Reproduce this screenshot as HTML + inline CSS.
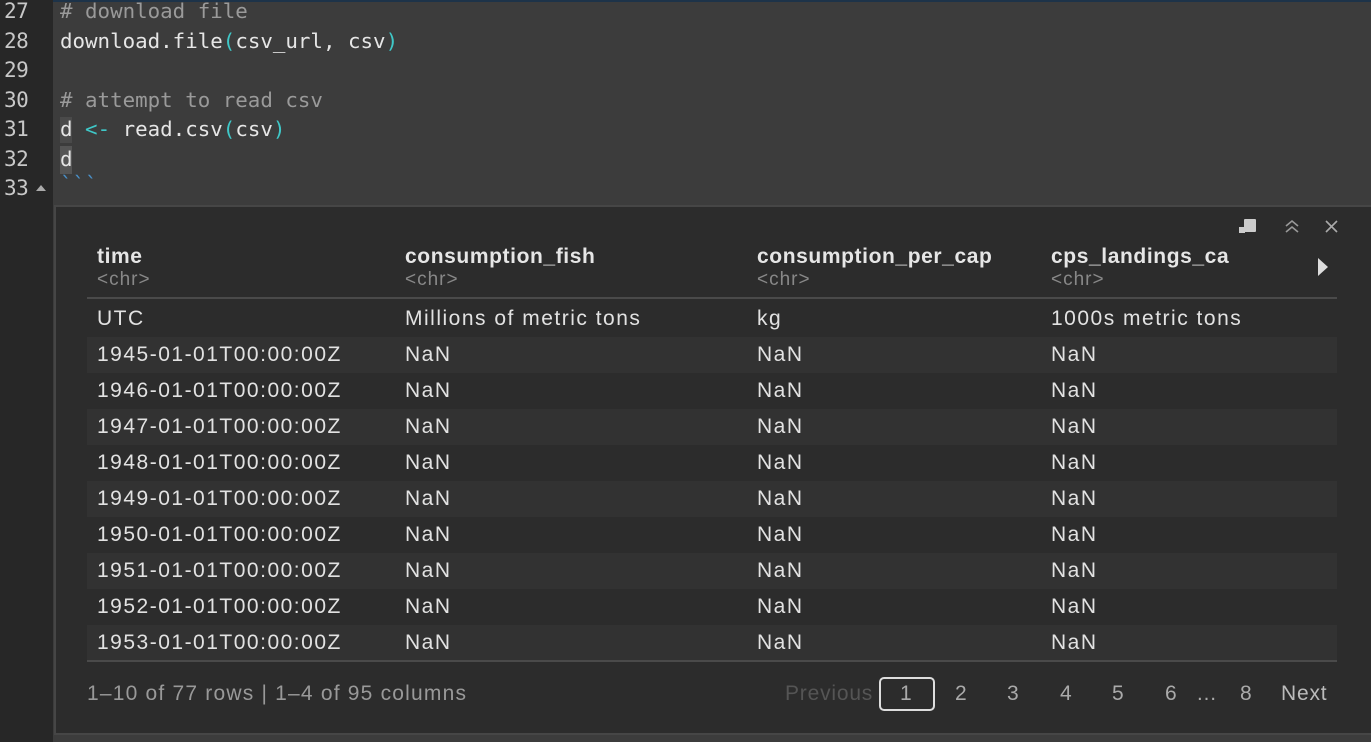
<!DOCTYPE html>
<html><head><style>
*{margin:0;padding:0;box-sizing:border-box}
body{width:1371px;height:742px;overflow:hidden;background:#3c3c3c;position:relative;font-family:"Liberation Sans",sans-serif}
.gutter{position:absolute;left:0;top:0;width:53px;height:742px;background:#272727}
.topline{position:absolute;left:0;top:0;width:1371px;height:2px;background:#1d3349}
.ln{position:absolute;left:4px;font:21px "DejaVu Sans Mono",monospace;color:#c8c8c8;letter-spacing:-0.5px}
.code{position:absolute;left:60px;font:20.8px "DejaVu Sans Mono",monospace;color:#e6e6e6;white-space:pre}
.cm{color:#9a9a9a}.p{color:#3fc8c8}
.panel{position:absolute;left:54px;top:205px;width:1317px;height:530px;background:#2c2c2c;border:2px solid #464646;border-right:none}
.t{position:absolute;font-size:21px;color:#e2e2e2;white-space:nowrap;letter-spacing:1.5px}
.h{font-weight:bold;color:#e6e6e6;letter-spacing:0.6px}
.ty{color:#888;font-size:19px;letter-spacing:1px}
.stripe{position:absolute;left:87px;width:1250px;height:36px;background:#323232}
.pg{position:absolute;top:682px;font-size:21px;color:#aaa;letter-spacing:0.8px}
</style></head><body>
<div class="topline"></div>
<div class="gutter"></div>
<div class="ln" style="top:-1px">27</div>
<div class="ln" style="top:29px">28</div>
<div class="ln" style="top:58px">29</div>
<div class="ln" style="top:88px">30</div>
<div class="ln" style="top:117px">31</div>
<div class="ln" style="top:147px">32</div>
<div class="ln" style="top:176px">33</div>
<div style="position:absolute;left:36px;top:185px;width:0;height:0;border-left:5px solid transparent;border-right:5px solid transparent;border-bottom:6px solid #aaa"></div>
<div class="code cm" style="top:-1px"># download file</div>
<div class="code" style="top:29px">download.file<span class="p">(</span>csv_url, csv<span class="p">)</span></div>
<div class="code cm" style="top:88px"># attempt to read csv</div>
<div style="position:absolute;left:60px;top:117px;width:12px;height:26px;background:#4a4a4a"></div>
<div style="position:absolute;left:60px;top:146px;width:12px;height:28px;background:#555"></div>
<div class="code" style="top:117px">d <span class="p">&lt;-</span> read.csv<span class="p">(</span>csv<span class="p">)</span></div>
<div class="code" style="top:147px">d</div>
<div class="code" style="top:172px;color:#4a90c8">&#96;&#96;&#96;</div>
<div class="panel"></div>
<div style="position:absolute;left:1244px;top:219px;width:12px;height:13px;background:#ccc;border-radius:1px"></div>
<div style="position:absolute;left:1239px;top:227px;width:6px;height:6px;background:#ccc"></div>
<svg style="position:absolute;left:1284px;top:218px" width="16" height="16"><path d="M2 8l6-5 6 5M2 14l6-5 6 5" stroke="#999" stroke-width="1.6" fill="none"/></svg>
<svg style="position:absolute;left:1325px;top:220px" width="13" height="13"><path d="M1 1l11 11M12 1L1 12" stroke="#aaa" stroke-width="1.6"/></svg>
<svg style="position:absolute;left:1317px;top:258px" width="12" height="18"><path d="M1 0l10 9-10 9z" fill="#ddd"/></svg>
<div class="t h" style="left:97px;top:245px">time</div>
<div class="t h" style="left:405px;top:245px">consumption_fish</div>
<div class="t h" style="left:757px;top:245px">consumption_per_cap</div>
<div class="t h" style="left:1051px;top:245px">cps_landings_ca</div>
<div class="t ty" style="left:97px;top:269px">&lt;chr&gt;</div>
<div class="t ty" style="left:405px;top:269px">&lt;chr&gt;</div>
<div class="t ty" style="left:757px;top:269px">&lt;chr&gt;</div>
<div class="t ty" style="left:1051px;top:269px">&lt;chr&gt;</div>
<div style="position:absolute;left:87px;top:297px;width:1250px;height:2px;background:#4a4a4a"></div>
<div class="stripe" style="top:337px"></div>
<div class="stripe" style="top:409px"></div>
<div class="stripe" style="top:481px"></div>
<div class="stripe" style="top:553px"></div>
<div class="stripe" style="top:625px"></div>
<div class="t" style="left:97px;top:307px">UTC</div>
<div class="t" style="left:405px;top:307px">Millions of metric tons</div>
<div class="t" style="left:757px;top:307px">kg</div>
<div class="t" style="left:1051px;top:307px">1000s metric tons</div>

<div class="t" style="left:97px;top:343px">1945-01-01T00:00:00Z</div><div class="t" style="left:405px;top:343px">NaN</div><div class="t" style="left:757px;top:343px">NaN</div><div class="t" style="left:1051px;top:343px">NaN</div>
<div class="t" style="left:97px;top:379px">1946-01-01T00:00:00Z</div><div class="t" style="left:405px;top:379px">NaN</div><div class="t" style="left:757px;top:379px">NaN</div><div class="t" style="left:1051px;top:379px">NaN</div>
<div class="t" style="left:97px;top:415px">1947-01-01T00:00:00Z</div><div class="t" style="left:405px;top:415px">NaN</div><div class="t" style="left:757px;top:415px">NaN</div><div class="t" style="left:1051px;top:415px">NaN</div>
<div class="t" style="left:97px;top:451px">1948-01-01T00:00:00Z</div><div class="t" style="left:405px;top:451px">NaN</div><div class="t" style="left:757px;top:451px">NaN</div><div class="t" style="left:1051px;top:451px">NaN</div>
<div class="t" style="left:97px;top:487px">1949-01-01T00:00:00Z</div><div class="t" style="left:405px;top:487px">NaN</div><div class="t" style="left:757px;top:487px">NaN</div><div class="t" style="left:1051px;top:487px">NaN</div>
<div class="t" style="left:97px;top:523px">1950-01-01T00:00:00Z</div><div class="t" style="left:405px;top:523px">NaN</div><div class="t" style="left:757px;top:523px">NaN</div><div class="t" style="left:1051px;top:523px">NaN</div>
<div class="t" style="left:97px;top:559px">1951-01-01T00:00:00Z</div><div class="t" style="left:405px;top:559px">NaN</div><div class="t" style="left:757px;top:559px">NaN</div><div class="t" style="left:1051px;top:559px">NaN</div>
<div class="t" style="left:97px;top:595px">1952-01-01T00:00:00Z</div><div class="t" style="left:405px;top:595px">NaN</div><div class="t" style="left:757px;top:595px">NaN</div><div class="t" style="left:1051px;top:595px">NaN</div>
<div class="t" style="left:97px;top:631px">1953-01-01T00:00:00Z</div><div class="t" style="left:405px;top:631px">NaN</div><div class="t" style="left:757px;top:631px">NaN</div><div class="t" style="left:1051px;top:631px">NaN</div>

<div style="position:absolute;left:87px;top:660px;width:1250px;height:2px;background:#4a4a4a"></div>
<div class="pg" style="left:87px;color:#999;letter-spacing:1.2px">1–10 of 77 rows | 1–4 of 95 columns</div>
<div class="pg" style="left:785px;color:#555">Previous</div>
<div style="position:absolute;left:879px;top:677px;width:56px;height:34px;border:2px solid #ddd;border-radius:5px"></div>
<div class="pg" style="left:900px;color:#aaa">1</div>
<div class="pg" style="left:955px">2</div>
<div class="pg" style="left:1007px">3</div>
<div class="pg" style="left:1060px">4</div>
<div class="pg" style="left:1112px">5</div>
<div class="pg" style="left:1165px">6</div>
<div class="pg" style="left:1196px">…</div>
<div class="pg" style="left:1240px">8</div>
<div class="pg" style="left:1281px;color:#bbb">Next</div>
</body></html>
